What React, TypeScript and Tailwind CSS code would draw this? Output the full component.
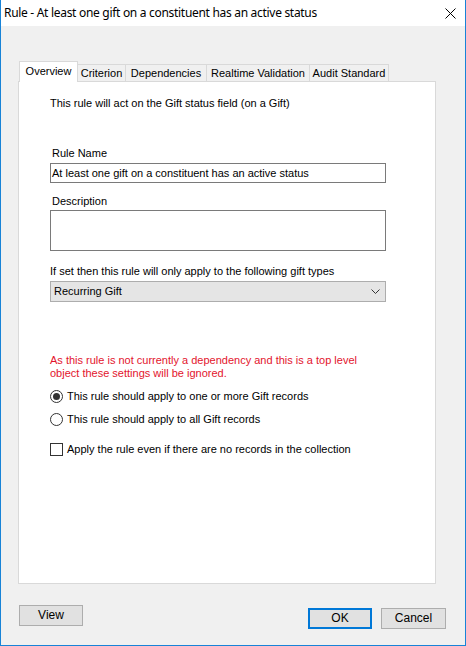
import React from "react";

const tabs = [
  { label: "Overview", w: "w-[59px]" },
  { label: "Criterion", w: "w-[48px]" },
  { label: "Dependencies", w: "w-[81px]" },
  { label: "Realtime Validation", w: "w-[103px]" },
  { label: "Audit Standard", w: "w-[79px]" },
];

function Radio({ checked, label }: { checked?: boolean; label: string }) {
  return (
    <div className="flex items-center h-[16px]">
      <span className="w-[13px] h-[13px] rounded-full border border-[#333] bg-white flex items-center justify-center">
        {checked && <span className="w-[7px] h-[7px] rounded-full bg-[#333]" />}
      </span>
      <span className="ml-[4px] text-[#000]">{label}</span>
    </div>
  );
}

export default function App() {
  return (
    <div
      className="w-[466px] h-[646px] bg-[#f0f0f0] border-x border-b border-[#1883d7] flex flex-col text-[11px] leading-[13px] text-black"
      style={{ fontFamily: '"Liberation Sans", Arial, sans-serif' }}
    >
      {/* Title bar */}
      <div className="h-[26px] bg-white flex items-center justify-between pl-[3px] pr-[9px]">
        <span
          className="text-[12px] leading-[16px] tracking-[-0.3px] text-black"
          style={{ fontFamily: '"Noto Sans", "Open Sans", sans-serif' }}
        >
          Rule - At least one gift on a constituent has an active status
        </span>
        <svg width="11" height="11" viewBox="0 0 11 11" className="mt-[1px]">
          <path d="M0.5 0.5 L10.5 10.5 M10.5 0.5 L0.5 10.5" stroke="#000" strokeWidth="1" />
        </svg>
      </div>

      <div className="flex-1 flex flex-col pl-[17px] pr-[29px]">
        {/* Tabs */}
        <div className="mt-[35px] flex items-end h-[20px] pl-[1px]">
          {tabs.map((t, i) =>
            i === 0 ? (
              <div
                key={t.label}
                className={`${t.w} h-[21px] bg-white border border-b-0 border-[#d9d9d9] relative z-10 -mb-px flex items-center justify-center pb-[2px]`}
              >
                {t.label}
              </div>
            ) : (
              <div
                key={t.label}
                className={`${t.w} h-[17px] bg-[#f0f0f0] border-t border-r border-[#d9d9d9] flex items-center justify-center`}
              >
                {t.label}
              </div>
            )
          )}
        </div>

        {/* Panel */}
        <div className="h-[503px] bg-white border border-[#d9d9d9] pl-[31px] pr-[49px]">
          <div className="mt-[15px]">This rule will act on the Gift status field (on a Gift)</div>

          <div className="mt-[37px] pl-[2px]">Rule Name</div>
          <div className="mt-[3px] h-[20px] border border-[#7a7a7a] flex items-center pl-[1px]">
            At least one gift on a constituent has an active status
          </div>

          <div className="mt-[12px] pl-[2px]">Description</div>
          <div className="mt-[2px] h-[41px] border border-[#7a7a7a]" />

          <div className="mt-[14px]">If set then this rule will only apply to the following gift types</div>
          <div className="mt-[3px] h-[21px] bg-[#e5e5e5] border border-[#adadad] flex items-center justify-between pl-[3px] pr-[5px]">
            <span>Recurring Gift</span>
            <svg width="9" height="5" viewBox="0 0 9 5">
              <path d="M0.5 0.5 L4.5 4.5 L8.5 0.5" stroke="#333" strokeWidth="1" fill="none" />
            </svg>
          </div>

          <div className="mt-[52px] text-[#e3142d]">
            As this rule is not currently a dependency and this is a top level
            <br />
            object these settings will be ignored.
          </div>

          <div className="mt-[8px] flex flex-col gap-[7px]">
            <Radio checked label="This rule should apply to one or more Gift records" />
            <Radio label="This rule should apply to all Gift records" />
          </div>

          <div className="mt-[14px] flex items-center h-[16px]">
            <span className="w-[13px] h-[13px] border border-[#333] bg-white" />
            <span className="ml-[4px]">Apply the rule even if there are no records in the collection</span>
          </div>
        </div>

        {/* Footer buttons */}
        <div className="mt-[21px] flex items-start justify-between pl-[1px]">
          <button className="w-[64px] h-[21px] bg-[#e1e1e1] border border-[#adadad] flex items-center justify-center text-[12px]">
            View
          </button>
          <div className="flex gap-[9px] mt-[3px] -mr-[10px]">
            <button className="w-[64px] h-[21px] bg-[#e1e1e1] border-2 border-[#0078d7] flex items-center justify-center text-[12px]">
              OK
            </button>
            <button className="w-[65px] h-[21px] bg-[#e1e1e1] border border-[#adadad] flex items-center justify-center text-[12px]">
              Cancel
            </button>
          </div>
        </div>
      </div>
    </div>
  );
}
